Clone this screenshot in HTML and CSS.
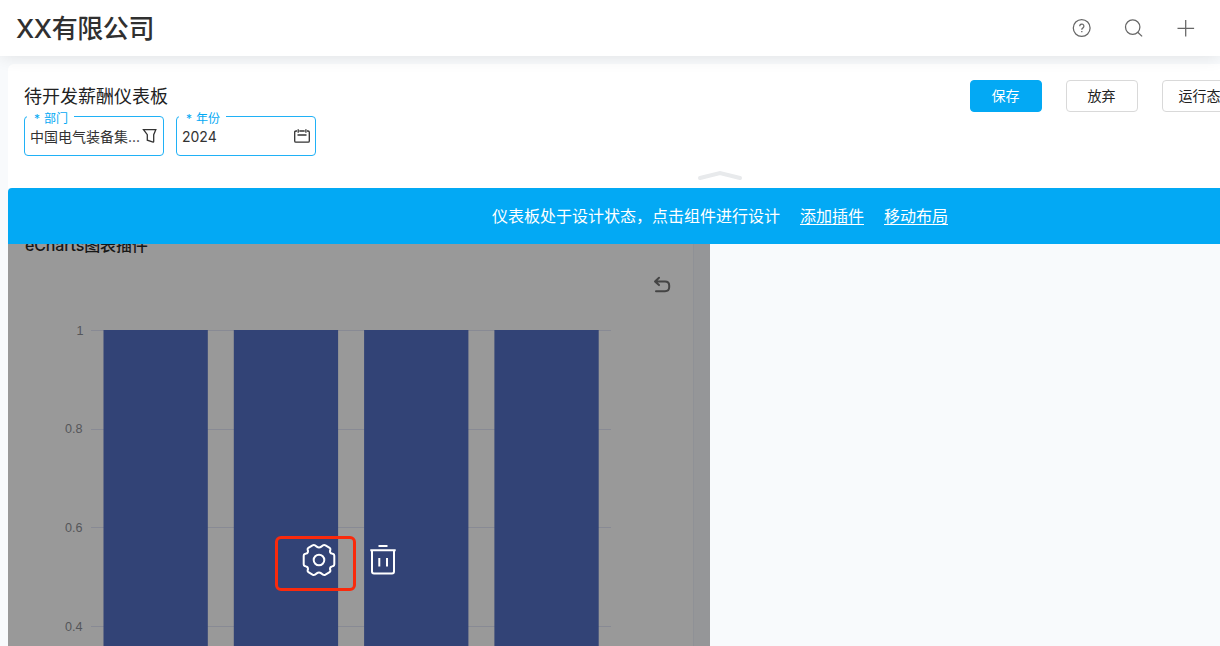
FILE: index.html
```html
<!DOCTYPE html>
<html lang="zh-CN">
<head>
<meta charset="utf-8">
<title>待开发薪酬仪表板</title>
<link rel="stylesheet" href="styles.css">
</head>
<body>
<header class="topbar">
  <div class="company">XX有限公司</div>
  <nav class="tools">
    <svg width="20" height="20" viewBox="0 0 20 20"><circle cx="9.700" cy="10" r="8.4"/><path d="M7.700 8.2a2.1 2.1 0 1 1 3.3 1.7c-.8.5-1.200.9-1.200 1.800M9.800 13v1.2"/></svg>
    <svg width="20" height="20" viewBox="0 0 20 20"><circle cx="8.700" cy="9.1" r="7.200"/><path d="M13.700 14.200l4.400 4.200"/></svg>
    <svg width="20" height="20" viewBox="0 0 20 20"><path d="M1.500 10.300h16.600M9.700 2v16.500"/></svg>
  </nav>
</header>
<main class="page">
  <section class="panel">
    <div class="heading">
      <h1 class="title">待开发薪酬仪表板</h1>
      <div class="filters">
        <div class="field">
          <span class="label"><i class="star">*</i>部门</span>
          <span class="value">中国电气装备集...</span>
          <svg width="16" height="16" viewBox="0 0 16 16"><path d="M1.500 1.700h12.300l-2.100 5v6.700q0 .6-.6.6l-5.800-1.800V6.700z"/></svg>
        </div>
        <div class="field">
          <span class="label"><i class="star">*</i>年份</span>
          <span class="value">2024</span>
          <svg width="16" height="16" viewBox="0 0 16 16"><path d="M3 3H2Q.7 3 .7 4.200v8.800q0 1.200 1.200 1.200h12.200q1.200 0 1.200-1.200V4.200Q15.300 3 14.100 3H13M5.300 3h5.400M4.200 1.200v3.600M11.900 1.200v3.600M3.500 7h9"/></svg>
        </div>
      </div>
    </div>
    <div class="actions">
      <button class="btn primary">保存</button>
      <button class="btn">放弃</button>
      <button class="btn">运行态</button>
    </div>
    <svg class="collapse" width="48" height="12" viewBox="0 0 48 12"><path d="M4 9L24 4l20 5"/></svg>
  </section>
  <div class="notice">
    <span>仪表板处于设计状态，点击组件进行设计</span>
    <a>添加插件</a>
    <a>移动布局</a>
  </div>
  <section class="board">
    <div class="widget">
      <div class="widget-body">
        <h2 class="widget-title">eCharts图表插件</h2>
        <svg class="chart" width="684" height="402" viewBox="0 0 684 402">
          <g class="grid">
            <path d="M83 86.500h520M83 185.500h520M83 283.500h520M83 382.500h520"/>
          </g>
          <g class="bars">
            <rect x="95.500" y="86" width="104.300" height="320"/>
            <rect x="225.800" y="86" width="104.300" height="320"/>
            <rect x="356.100" y="86" width="104.300" height="320"/>
            <rect x="486.400" y="86" width="104.300" height="320"/>
          </g>
          <g class="ticks">
            <text x="75.500" y="91">1</text>
            <text x="74.500" y="189">0.8</text>
            <text x="74.500" y="288">0.6</text>
            <text x="74.500" y="386.500">0.4</text>
          </g>
          <path class="undo" d="M651 33.700l-4 3.700 4 3.700M647.500 37.400h9.500q4.200 0 4.200 4.100v1.500q0 4.200-4.200 4.200h-9"/>
        </svg>
      </div>
      <div class="controls">
        <span class="selected"></span>
        <svg class="gear" width="34" height="34" viewBox="-17 -17 34 34"><circle r="5.300"/><path d="M-2.300 -13.400Q0 -11.600 2.300 -13.400L4 -14.700Q5.200 -15.300 6.500 -14.600L10.600 -12.200Q11.600 -11.500 11.400 -10.200L11 -9.200Q10.800 -6.800 13 -6.400L14.200 -6Q15.300 -5.500 15.300 -4.200V4.200Q15.300 5.500 14.200 6L13 6.400Q10.800 6.800 11 9.200L11.400 10.200Q11.600 11.500 10.600 12.200L6.500 14.600Q5.200 15.300 4 14.700L2.300 13.400Q0 11.600 -2.300 13.400L-4 14.700Q-5.200 15.300 -6.500 14.600L-10.600 12.200Q-11.600 11.500 -11.400 10.200L-11 9.200Q-10.800 6.800 -13 6.400L-14.200 6Q-15.300 5.500 -15.300 4.200V-4.200Q-15.300 -5.500 -14.200 -6L-13 -6.400Q-10.800 -6.800 -11 -9.200L-11.400 -10.200Q-11.600 -11.500 -10.600 -12.200L-6.500 -14.600Q-5.200 -15.300 -4 -14.700Z"/></svg>
        <svg class="trash" width="28" height="32" viewBox="0 0 28 32"><path d="M9.500 2h9M1.300 6.200h25.400M3 6.200v21.300q0 2 2 2h18q2 0 2-2V6.200M10.300 14v8.500M18 14v8.500"/></svg>
      </div>
    </div>
  </section>
</main>
</body>
</html>
```
FILE: styles.css
```css
* { box-sizing: border-box; }

body {
  margin: 0;
  height: 646px;
  overflow: hidden;
  background: #f8fafc;
  color: #222;
  font-family: Inter, "Noto Sans CJK SC", sans-serif;
}

svg { fill: none; flex: none; }

.topbar {
  position: relative;
  display: flex;
  align-items: center;
  justify-content: space-between;
  height: 56px;
  padding: 0 24px 0 16px;
  background: #fff;
  box-shadow: 0 0 18px rgba(0, 0, 0, .11);
}
.company { font-size: 26px; font-weight: 500; letter-spacing: -.4px; line-height: 57px; color: #303030; }
.tools { display: flex; gap: 32px; stroke: #666; stroke-width: 1.25; }

.page { padding: 8px 0 0 8px; overflow: hidden; }
.topbar { z-index: 1; clip-path: inset(0 0 -20px 0); }

.panel {
  position: relative;
  display: flex;
  justify-content: space-between;
  width: 1424px;
  height: 124px;
  padding: 16px;
  background: #fff;
  border-radius: 6px 6px 0 0;
}
.heading { width: 945.5px; flex: none; }
.title { margin: 0; height: 36px; font-size: 18px; font-weight: 400; line-height: 34px; }
.filters { display: flex; gap: 12px; }
.field {
  position: relative;
  display: flex;
  align-items: center;
  justify-content: space-between;
  width: 140px;
  height: 40px;
  padding: 0 5px;
  border: 1px solid #20b1f6;
  border-radius: 4px;
  color: #333;
  font-size: 14px;
  stroke: #333;
  stroke-width: 1.3;
}
.value { white-space: nowrap; stroke: none; }
.label {
  position: absolute;
  left: 2px;
  top: -8px;
  width: 47px;
  height: 20px;
  padding-left: 7px;
  background: #fff;
  color: #03a9f4;
  font-size: 12px;
  line-height: 20px;
}
.star { display: inline-block; width: 10px; font-style: normal; line-height: 10px; }

.actions { display: flex; gap: 24px; flex: 1; }
.btn {
  flex: none;
  width: 72px;
  height: 32px;
  padding: 0;
  border: 1px solid #d9d9d9;
  border-radius: 4px;
  background: #fff;
  color: #222;
  font: 14px/30px Inter, "Noto Sans CJK SC", sans-serif;
}
.btn:last-child { width: 76px; }
.primary { border-color: #03a9f4; background: #03a9f4; color: #fff; }
.collapse { position: absolute; left: 688px; top: 105px; stroke: #e8eaec; stroke-width: 4; stroke-linecap: round; }

.notice {
  position: relative;
  display: flex;
  justify-content: center;
  gap: 20px;
  width: 1424px;
  height: 56px;
  border-radius: 4px 4px 0 0;
  background: #03a9f4;
  color: #fff;
  font-size: 16px;
  line-height: 57px;
}
.notice a { text-decoration: underline; text-underline-offset: 2px; }

.board { height: 402px; overflow: hidden; }
.widget { position: relative; width: 702px; height: 402px; background: #959698; }
.widget-body { width: 686px; height: 402px; border-right: 1px solid #8f9196; background: #999; }
.widget-title {
  height: 0;
  margin: 0;
  padding-left: 17px;
  color: #171717;
  font-size: 16px;
  font-weight: 500;
  letter-spacing: -.15px;
  line-height: 2px;
}
.chart { display: block; }
.grid { stroke: #888a94; }
.bars { fill: #324376; }
.ticks { fill: #55565a; font: 12.6px "Liberation Sans", sans-serif; text-anchor: end; }
.undo { stroke: #444; stroke-width: 2; stroke-linecap: round; stroke-linejoin: round; }

.controls { position: absolute; left: 267px; top: 292px; width: 130px; height: 55px; stroke: #fff; stroke-width: 2; }
.selected { position: absolute; left: 0; top: 0; width: 81px; height: 55px; border: 3px solid #fa2a0c; border-radius: 6px; }
.gear { position: absolute; left: 27px; top: 7px; }
.trash { position: absolute; left: 94px; top: 8px; }
```
